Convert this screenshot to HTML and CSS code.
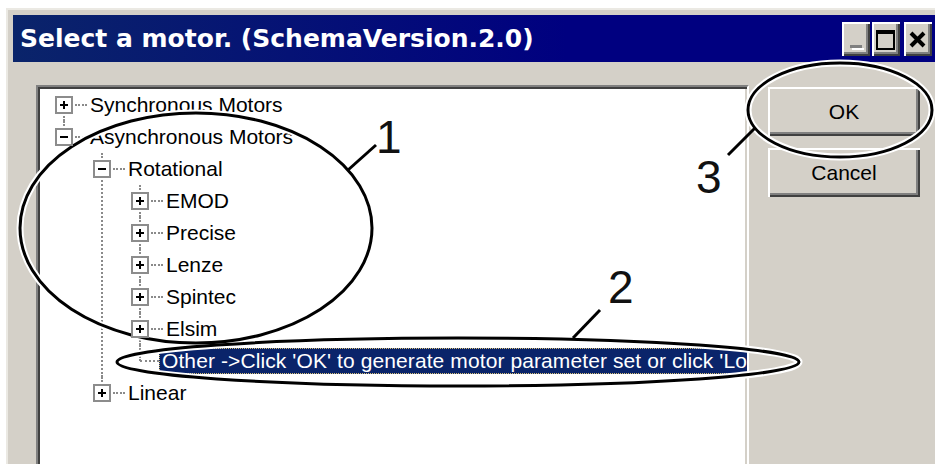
FILE: index.html
```html
<!DOCTYPE html>
<html lang="en">
<head>
    <meta charset="UTF-8">
    <meta name="viewport" content="width=device-width, initial-scale=1.0">
    <title>Select a motor</title>
    <link rel="stylesheet" href="styles.css">
</head>
<body>
    <div class="window">
        <div class="titlebar">
            <span class="title">Select a motor. (SchemaVersion.2.0)</span>
            <div class="caption-buttons">
                <span class="cap-btn">
                    <svg width="28" height="34" viewBox="0 0 28 34"><rect x="8" y="23" width="12" height="3" fill="#808080"/><rect x="10" y="26" width="12" height="2" fill="#fff"/></svg>
                </span>
                <span class="cap-btn">
                    <svg width="28" height="34" viewBox="0 0 28 34"><rect x="5" y="9" width="17" height="18" fill="none" stroke="#000" stroke-width="2"/><rect x="4" y="8" width="19" height="4" fill="#000"/></svg>
                </span>
                <span class="cap-btn close">
                    <svg width="28" height="34" viewBox="0 0 28 34"><path d="M7 11 L20 24 M20 11 L7 24" stroke="#000" stroke-width="4"/></svg>
                </span>
            </div>
        </div>

        <div class="content">
            <div class="treebox">
                <ul class="tree">
                    <li><div class="node"><span class="exp plus"></span><span class="dash"></span><span class="label">Synchronous Motors</span></div></li>
                    <li>
                        <div class="node"><span class="exp"></span><span class="dash"></span><span class="label">Asynchronous Motors</span></div>
                        <ul>
                            <li>
                                <div class="node"><span class="exp"></span><span class="dash"></span><span class="label">Rotational</span></div>
                                <ul>
                                    <li><div class="node"><span class="exp plus"></span><span class="dash"></span><span class="label">EMOD</span></div></li>
                                    <li><div class="node"><span class="exp plus"></span><span class="dash"></span><span class="label">Precise</span></div></li>
                                    <li><div class="node"><span class="exp plus"></span><span class="dash"></span><span class="label">Lenze</span></div></li>
                                    <li><div class="node"><span class="exp plus"></span><span class="dash"></span><span class="label">Spintec</span></div></li>
                                    <li><div class="node"><span class="exp plus"></span><span class="dash"></span><span class="label">Elsim</span></div></li>
                                    <li><div class="node"><span class="stub"></span><span class="label selected">Other -&gt;Click 'OK' to generate motor parameter set or click 'Load' to open a file</span></div></li>
                                </ul>
                            </li>
                            <li><div class="node"><span class="exp plus"></span><span class="dash"></span><span class="label">Linear</span></div></li>
                        </ul>
                    </li>
                </ul>
            </div>

            <div class="actions">
                <button class="btn">OK</button>
                <button class="btn">Cancel</button>
            </div>
        </div>
    </div>

    <!-- callouts drawn over the dialog -->
    <svg class="callouts" width="935" height="464" viewBox="0 0 935 464">
        <g fill="none" stroke="#fff" stroke-width="7">
            <ellipse cx="196" cy="228" rx="176" ry="115"/>
            <ellipse cx="458" cy="362" rx="341" ry="24"/>
            <ellipse cx="840" cy="110" rx="92" ry="47"/>
        </g>
        <g fill="none" stroke="#000" stroke-width="3">
            <ellipse cx="196" cy="228" rx="176" ry="115"/>
            <ellipse cx="458" cy="362" rx="341" ry="24"/>
            <ellipse cx="840" cy="110" rx="92" ry="47"/>
            <path d="M348 170 L376 145"/>
            <path d="M573 338 L600 310"/>
            <path d="M755 128 L728 155"/>
        </g>
        <g class="num">
            <text x="376" y="153">1</text>
            <text x="608" y="303">2</text>
            <text x="696" y="193">3</text>
        </g>
    </svg>
</body>
</html>
```

FILE: styles.css
```css
html, body {
    margin: 0;
    height: 464px;
    overflow: hidden;
    background: #fff;
}
body {
    position: relative;
    font-family: "Liberation Sans", Arial, sans-serif;
}
.window {
    box-sizing: border-box;
    margin: 8px 0 0 6px;
    height: 456px;
    padding: 5px 0 0 5px;
    overflow: hidden;
    background: #d4d0c8;
    border-top: 2px solid #ebe9e3;
    border-left: 2px solid #ebe9e3;
}
.titlebar {
    height: 47px;
    display: flex;
    align-items: center;
    padding-left: 7px;
    background: linear-gradient(to right, #0a246a, #000080 60%);
}
.title {
    font-family: "DejaVu Sans", Verdana, sans-serif;
    font-weight: bold;
    font-size: 25px;
    color: #fff;
    white-space: nowrap;
}
.caption-buttons {
    margin-left: auto;
    padding-right: 3px;
    display: flex;
    gap: 2px;
}
.cap-btn {
    width: 28px;
    height: 34px;
    background: #d4d0c8;
    box-shadow: inset 2px 2px 0 #fff, inset -2px -2px 0 #404040, inset -4px -4px 0 #808080;
}
.cap-btn svg {
    display: block;
}
.cap-btn.close {
    margin-left: 2px;
}
.content {
    display: flex;
    padding-top: 23px;
}
.treebox {
    box-sizing: border-box;
    margin-left: 23px;
    width: 713px;
    height: 390px;
    flex: none;
    padding: 2px;
    background: #fff;
    border: 2px solid;
    border-color: #808080 #fff #fff #808080;
    box-shadow: inset 2px 2px 0 #404040, inset -2px -2px 0 #d4d0c8;
    overflow: hidden;
    font-size: 21px;
    color: #000;
}
.tree, .tree ul {
    list-style: none;
    margin: 0;
    padding: 0;
}
.tree ul {
    padding-left: 38px;
}
.tree li {
    position: relative;
}
.tree li::before {
    content: "";
    position: absolute;
    left: 23px;
    top: 0;
    bottom: 0;
    border-left: 2px dotted #8a8a8a;
}
.tree > li:first-child::before {
    top: 16px;
}
.tree li:last-child::before {
    bottom: auto;
    height: 16px;
}
.node {
    display: flex;
    align-items: center;
    height: 32px;
    padding-left: 15px;
    white-space: nowrap;
}
.exp {
    position: relative;
    z-index: 1;
    flex: none;
    width: 18px;
    height: 18px;
    box-sizing: border-box;
    border: 2px solid #8c8c8c;
    background: #fff;
}
.exp::before {
    content: "";
    position: absolute;
    left: 3px;
    top: 6px;
    width: 8px;
    height: 2px;
    background: #000;
}
.exp.plus::after {
    content: "";
    position: absolute;
    left: 6px;
    top: 3px;
    width: 2px;
    height: 8px;
    background: #000;
}
.dash {
    flex: none;
    width: 12px;
    margin-left: 2px;
    border-top: 2px dotted #8a8a8a;
}
.stub {
    flex: none;
    width: 19px;
    margin-left: 9px;
    border-top: 2px dotted #8a8a8a;
}
.label {
    padding: 1px 2px;
    border: 1px dotted transparent;
    line-height: 22px;
}
.label.selected {
    background: #0a246a;
    color: #fff;
    border-color: #d8c078;
    letter-spacing: 0.1px;
}
.actions {
    margin-left: 19px;
    padding-top: 2px;
    display: flex;
    flex-direction: column;
    gap: 12px;
}
.btn {
    width: 152px;
    height: 49px;
    padding: 0;
    border: none;
    background: #d4d0c8;
    font-family: "Liberation Sans", Arial, sans-serif;
    font-size: 21px;
    color: #000;
    box-shadow: inset 2px 2px 0 #fff, inset -2px -2px 0 #404040, inset -4px -4px 0 #808080;
}
.callouts {
    position: absolute;
    left: 0;
    top: 0;
    pointer-events: none;
}
.num text {
    font-family: "Liberation Sans", Arial, sans-serif;
    font-size: 46px;
    fill: #111;
}
```
